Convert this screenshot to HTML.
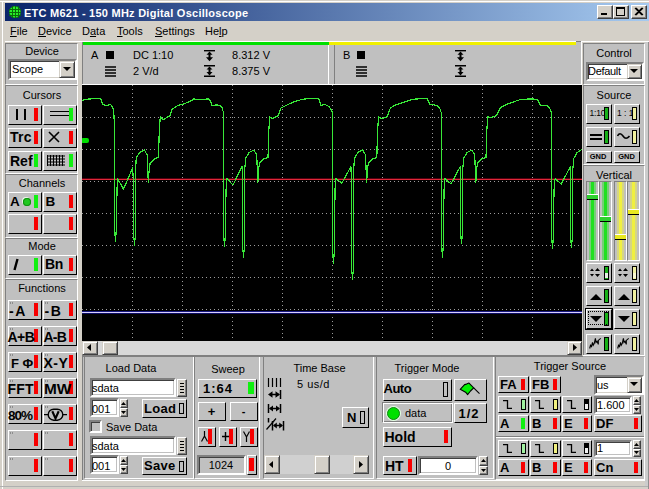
<!DOCTYPE html>
<html><head><meta charset="utf-8"><style>
html,body{margin:0;padding:0}
body{width:649px;height:489px;overflow:hidden;position:relative;background:#D4D0C8;font-family:"Liberation Sans",sans-serif;font-size:11px;color:#000}
.a{position:absolute;box-sizing:content-box}
.t{line-height:20px;height:20px;white-space:nowrap}
.btn{border:1px solid;border-color:#FFFFFF #000000 #000000 #FFFFFF}
</style></head><body>

<div class="a" style="left:0px;top:1px;width:649px;height:1px;background:#FFFFFF"></div>
<div class="a" style="left:2px;top:1px;width:1px;height:488px;background:#FFFFFF"></div>
<div class="a" style="left:5px;top:3px;width:644px;height:18px;background:linear-gradient(to right,#0A246A,#A6CAF0)"></div>
<svg class="a" style="left:9px;top:6px" width="12" height="12" viewBox="0 0 12 12"><circle cx="6" cy="6" r="6" fill="#109010"/><circle cx="6" cy="6" r="5.4" fill="#28F028"/><g stroke="#0A6A0A" stroke-width="1"><line x1="0" y1="3.5" x2="12" y2="3.5"/><line x1="0" y1="6.5" x2="12" y2="6.5"/><line x1="0" y1="9.5" x2="12" y2="9.5"/><line x1="3.5" y1="0" x2="3.5" y2="12"/><line x1="6.5" y1="0" x2="6.5" y2="12"/><line x1="9.5" y1="0" x2="9.5" y2="12"/></g></svg>
<div class="a t" style="left:24px;top:3.19px;font-size:11px;font-weight:bold;color:#FFFFFF;letter-spacing:0.25px">ETC M621 - 150 MHz Digital Oscilloscope</div>
<div class="a" style="left:597px;top:5px;width:14px;height:12px;background:#D4D0C8;border:1px solid;border-color:#FFFFFF #404040 #404040 #FFFFFF;box-shadow:inset -1px -1px #808080"></div>
<div class="a" style="left:613px;top:5px;width:14px;height:12px;background:#D4D0C8;border:1px solid;border-color:#FFFFFF #404040 #404040 #FFFFFF;box-shadow:inset -1px -1px #808080"></div>
<div class="a" style="left:631px;top:5px;width:14px;height:12px;background:#D4D0C8;border:1px solid;border-color:#FFFFFF #404040 #404040 #FFFFFF;box-shadow:inset -1px -1px #808080"></div>
<div class="a" style="left:601px;top:13px;width:6px;height:2px;background:#000"></div>
<div class="a" style="left:616px;top:7px;width:7px;height:6px;border:1px solid #000;border-top-width:2px"></div>
<svg class="a" style="left:634px;top:7px" width="10" height="9" viewBox="0 0 10 9"><path d="M1 1 L8 8 M2 1 L9 8 M8 1 L1 8 M9 1 L2 8" stroke="#000" stroke-width="1.1"/></svg>
<div class="a t" style="left:10px;top:21.19px;font-size:11px;font-weight:normal;color:#000;"><u>F</u>ile</div>
<div class="a t" style="left:38px;top:21.19px;font-size:11px;font-weight:normal;color:#000;"><u>D</u>evice</div>
<div class="a t" style="left:82px;top:21.19px;font-size:11px;font-weight:normal;color:#000;">D<u>a</u>ta</div>
<div class="a t" style="left:117px;top:21.19px;font-size:11px;font-weight:normal;color:#000;"><u>T</u>ools</div>
<div class="a t" style="left:155px;top:21.19px;font-size:11px;font-weight:normal;color:#000;"><u>S</u>ettings</div>
<div class="a t" style="left:205px;top:21.19px;font-size:11px;font-weight:normal;color:#000;">He<u>l</u>p</div>
<div class="a" style="left:5px;top:43px;width:71px;height:40px;background:#C0C0C0;border:1px solid;border-color:#808080 #FFFFFF #FFFFFF #808080"></div>
<div class="a" style="left:5px;top:85px;width:71px;height:87px;background:#C0C0C0;border:1px solid;border-color:#808080 #FFFFFF #FFFFFF #808080"></div>
<div class="a" style="left:5px;top:174px;width:71px;height:62px;background:#C0C0C0;border:1px solid;border-color:#808080 #FFFFFF #FFFFFF #808080"></div>
<div class="a" style="left:5px;top:238px;width:71px;height:39px;background:#C0C0C0;border:1px solid;border-color:#808080 #FFFFFF #FFFFFF #808080"></div>
<div class="a" style="left:5px;top:279px;width:71px;height:200px;background:#C0C0C0;border:1px solid;border-color:#808080 #FFFFFF #FFFFFF #808080"></div>
<div class="a t" style="left:-58px;top:41.19px;width:200px;text-align:center;font-size:11px;font-weight:normal;color:#000;">Device</div>
<div class="a" style="left:8px;top:59px;width:65px;height:17px;background:#FFFFFF;border:2px solid;border-color:#808080 #FFFFFF #FFFFFF #808080;box-shadow:inset 1px 1px #404040, inset -1px -1px #D4D0C8"></div>
<div class="a" style="left:59px;top:61px;width:14px;height:15px;background:#D4D0C8;border:1px solid;border-color:#D4D0C8 #404040 #404040 #D4D0C8;box-shadow:inset 1px 1px #FFFFFF, inset -1px -1px #808080"></div>
<svg class="a" style="left:63px;top:67px" width="8" height="4" viewBox="0 0 8 4"><path d="M0 0H8L4 4Z" fill="#000"/></svg>
<div class="a t" style="left:12px;top:59.19px;font-size:11px;font-weight:normal;color:#000;">Scope</div>
<div class="a t" style="left:-58px;top:85.19px;width:200px;text-align:center;font-size:11px;font-weight:normal;color:#000;">Cursors</div>
<div class="a btn" style="left:8px;top:105px;width:32px;height:18px;background:#C0C0C0"></div>
<div class="a" style="left:34px;top:108px;width:4px;height:13px;background:#F80000"></div>
<div class="a" style="left:16px;top:109px;width:2px;height:11px;background:#000"></div>
<div class="a" style="left:24px;top:109px;width:2px;height:11px;background:#000"></div>
<div class="a btn" style="left:43px;top:105px;width:32px;height:18px;background:#C0C0C0"></div>
<div class="a" style="left:69px;top:108px;width:4px;height:13px;background:#10F010"></div>
<div class="a" style="left:50px;top:111px;width:19px;height:1px;background:#000"></div>
<div class="a" style="left:50px;top:115px;width:19px;height:1px;background:#000"></div>
<div class="a btn" style="left:8px;top:128px;width:32px;height:18px;background:#C0C0C0"></div>
<div class="a" style="left:34px;top:131px;width:4px;height:13px;background:#F80000"></div>
<div class="a t" style="left:10px;top:127.15px;font-size:14px;font-weight:bold;color:#000;letter-spacing:0.25px">Trc</div>
<div class="a btn" style="left:43px;top:128px;width:32px;height:18px;background:#C0C0C0"></div>
<div class="a" style="left:69px;top:131px;width:4px;height:13px;background:#F80000"></div>
<svg class="a" style="left:48px;top:131px" width="12" height="12" viewBox="0 0 12 12"><path d="M1 1L11 11M11 1L1 11" stroke="#000" stroke-width="1.6"/></svg>
<div class="a btn" style="left:8px;top:151px;width:32px;height:18px;background:#C0C0C0"></div>
<div class="a" style="left:34px;top:154px;width:4px;height:13px;background:#10F010"></div>
<div class="a t" style="left:10px;top:151.15px;font-size:14px;font-weight:bold;color:#000;">Ref</div>
<div class="a btn" style="left:43px;top:151px;width:32px;height:18px;background:#C0C0C0"></div>
<div class="a" style="left:69px;top:154px;width:4px;height:13px;background:#10F010"></div>
<svg class="a" style="left:47px;top:155px" width="18" height="11" viewBox="0 0 18 11"><g stroke="#000" stroke-width="1"><line x1="0.5" y1="0" x2="0.5" y2="11"/><line x1="3.5" y1="0" x2="3.5" y2="11"/><line x1="6.5" y1="0" x2="6.5" y2="11"/><line x1="9.5" y1="0" x2="9.5" y2="11"/><line x1="12.5" y1="0" x2="12.5" y2="11"/><line x1="15.5" y1="0" x2="15.5" y2="11"/><line x1="18.5" y1="0" x2="18.5" y2="11"/><line x1="0" y1="1" x2="18" y2="1"/><line x1="0" y1="4" x2="18" y2="4"/><line x1="0" y1="7" x2="18" y2="7"/><line x1="0" y1="10" x2="18" y2="10"/></g></svg>
<div class="a t" style="left:-58px;top:173.19px;width:200px;text-align:center;font-size:11px;font-weight:normal;color:#000;">Channels</div>
<div class="a btn" style="left:8px;top:192px;width:32px;height:18px;background:#C0C0C0"></div>
<div class="a" style="left:34px;top:195px;width:4px;height:13px;background:#10F010"></div>
<div class="a t" style="left:10px;top:192.32px;font-size:13.5px;font-weight:bold;color:#000;">A</div>
<div class="a" style="left:23px;top:198px;width:8px;height:8px;border-radius:50%;background:#20C820;box-shadow:inset 0 0 0 1px #109010, -1px -1px 0 0 #E8F8E8"></div>
<div class="a btn" style="left:43px;top:192px;width:32px;height:18px;background:#C0C0C0"></div>
<div class="a" style="left:69px;top:195px;width:4px;height:13px;background:#F80000"></div>
<div class="a t" style="left:45.5px;top:192.32px;font-size:13.5px;font-weight:bold;color:#000;">B</div>
<div class="a btn" style="left:8px;top:214px;width:32px;height:18px;background:#C0C0C0"></div>
<div class="a" style="left:34px;top:217px;width:4px;height:13px;background:#F80000"></div>
<div class="a btn" style="left:43px;top:214px;width:32px;height:18px;background:#C0C0C0"></div>
<div class="a" style="left:69px;top:217px;width:4px;height:13px;background:#F80000"></div>
<div class="a t" style="left:-58px;top:236.19px;width:200px;text-align:center;font-size:11px;font-weight:normal;color:#000;">Mode</div>
<div class="a btn" style="left:8px;top:255px;width:32px;height:18px;background:#C0C0C0"></div>
<div class="a" style="left:34px;top:258px;width:4px;height:13px;background:#10F010"></div>
<svg class="a" style="left:13px;top:258px" width="6" height="13" viewBox="0 0 6 13"><path d="M4.5 1L1.5 12" stroke="#000" stroke-width="2.4"/></svg>
<div class="a btn" style="left:43px;top:255px;width:32px;height:18px;background:#C0C0C0"></div>
<div class="a" style="left:69px;top:258px;width:4px;height:13px;background:#F80000"></div>
<div class="a t" style="left:45px;top:254.15px;font-size:14px;font-weight:bold;color:#000;letter-spacing:-0.25px">Bn</div>
<div class="a t" style="left:-58px;top:278.19px;width:200px;text-align:center;font-size:11px;font-weight:normal;color:#000;">Functions</div>
<div class="a btn" style="left:8px;top:300px;width:32px;height:18px;background:#C0C0C0"></div>
<div class="a" style="left:34px;top:303px;width:4px;height:13px;background:#F80000"></div>
<div class="a btn" style="left:43px;top:300px;width:32px;height:18px;background:#C0C0C0"></div>
<div class="a" style="left:69px;top:303px;width:4px;height:13px;background:#F80000"></div>
<div class="a" style="left:10px;top:302px;width:1px;height:2px;background:#8C8C8C"></div>
<div class="a" style="left:12px;top:302px;width:1px;height:2px;background:#8C8C8C"></div>
<div class="a" style="left:45px;top:302px;width:1px;height:2px;background:#8C8C8C"></div>
<div class="a" style="left:47px;top:302px;width:1px;height:2px;background:#8C8C8C"></div>
<div class="a btn" style="left:8px;top:326px;width:32px;height:18px;background:#C0C0C0"></div>
<div class="a" style="left:34px;top:329px;width:4px;height:13px;background:#F80000"></div>
<div class="a btn" style="left:43px;top:326px;width:32px;height:18px;background:#C0C0C0"></div>
<div class="a" style="left:69px;top:329px;width:4px;height:13px;background:#F80000"></div>
<div class="a" style="left:10px;top:328px;width:1px;height:2px;background:#8C8C8C"></div>
<div class="a" style="left:12px;top:328px;width:1px;height:2px;background:#8C8C8C"></div>
<div class="a" style="left:45px;top:328px;width:1px;height:2px;background:#8C8C8C"></div>
<div class="a" style="left:47px;top:328px;width:1px;height:2px;background:#8C8C8C"></div>
<div class="a btn" style="left:8px;top:352px;width:32px;height:18px;background:#C0C0C0"></div>
<div class="a" style="left:34px;top:355px;width:4px;height:13px;background:#F80000"></div>
<div class="a btn" style="left:43px;top:352px;width:32px;height:18px;background:#C0C0C0"></div>
<div class="a" style="left:69px;top:355px;width:4px;height:13px;background:#F80000"></div>
<div class="a" style="left:10px;top:354px;width:1px;height:2px;background:#8C8C8C"></div>
<div class="a" style="left:12px;top:354px;width:1px;height:2px;background:#8C8C8C"></div>
<div class="a" style="left:45px;top:354px;width:1px;height:2px;background:#8C8C8C"></div>
<div class="a" style="left:47px;top:354px;width:1px;height:2px;background:#8C8C8C"></div>
<div class="a btn" style="left:8px;top:378px;width:32px;height:18px;background:#C0C0C0"></div>
<div class="a" style="left:34px;top:381px;width:4px;height:13px;background:#F80000"></div>
<div class="a btn" style="left:43px;top:378px;width:32px;height:18px;background:#C0C0C0"></div>
<div class="a" style="left:69px;top:381px;width:4px;height:13px;background:#F80000"></div>
<div class="a" style="left:10px;top:380px;width:1px;height:2px;background:#8C8C8C"></div>
<div class="a" style="left:12px;top:380px;width:1px;height:2px;background:#8C8C8C"></div>
<div class="a" style="left:45px;top:380px;width:1px;height:2px;background:#8C8C8C"></div>
<div class="a" style="left:47px;top:380px;width:1px;height:2px;background:#8C8C8C"></div>
<div class="a btn" style="left:8px;top:404px;width:32px;height:18px;background:#C0C0C0"></div>
<div class="a" style="left:34px;top:407px;width:4px;height:13px;background:#F80000"></div>
<div class="a btn" style="left:43px;top:404px;width:32px;height:18px;background:#C0C0C0"></div>
<div class="a" style="left:69px;top:407px;width:4px;height:13px;background:#F80000"></div>
<div class="a" style="left:10px;top:406px;width:1px;height:2px;background:#8C8C8C"></div>
<div class="a" style="left:12px;top:406px;width:1px;height:2px;background:#8C8C8C"></div>
<div class="a" style="left:45px;top:406px;width:1px;height:2px;background:#8C8C8C"></div>
<div class="a" style="left:47px;top:406px;width:1px;height:2px;background:#8C8C8C"></div>
<div class="a btn" style="left:8px;top:430px;width:32px;height:18px;background:#C0C0C0"></div>
<div class="a" style="left:34px;top:433px;width:4px;height:13px;background:#F80000"></div>
<div class="a btn" style="left:43px;top:430px;width:32px;height:18px;background:#C0C0C0"></div>
<div class="a" style="left:69px;top:433px;width:4px;height:13px;background:#F80000"></div>
<div class="a" style="left:10px;top:432px;width:1px;height:2px;background:#8C8C8C"></div>
<div class="a" style="left:12px;top:432px;width:1px;height:2px;background:#8C8C8C"></div>
<div class="a" style="left:45px;top:432px;width:1px;height:2px;background:#8C8C8C"></div>
<div class="a" style="left:47px;top:432px;width:1px;height:2px;background:#8C8C8C"></div>
<div class="a btn" style="left:8px;top:456px;width:32px;height:18px;background:#C0C0C0"></div>
<div class="a" style="left:34px;top:459px;width:4px;height:13px;background:#F80000"></div>
<div class="a btn" style="left:43px;top:456px;width:32px;height:18px;background:#C0C0C0"></div>
<div class="a" style="left:69px;top:459px;width:4px;height:13px;background:#F80000"></div>
<div class="a" style="left:10px;top:458px;width:1px;height:2px;background:#8C8C8C"></div>
<div class="a" style="left:12px;top:458px;width:1px;height:2px;background:#8C8C8C"></div>
<div class="a" style="left:45px;top:458px;width:1px;height:2px;background:#8C8C8C"></div>
<div class="a" style="left:47px;top:458px;width:1px;height:2px;background:#8C8C8C"></div>
<div class="a t" style="left:9px;top:301.15px;font-size:14px;font-weight:bold;color:#000;letter-spacing:1.5px">-A</div>
<div class="a t" style="left:44.5px;top:301.15px;font-size:14px;font-weight:bold;color:#000;letter-spacing:1.5px">-B</div>
<div class="a t" style="left:7.5px;top:327.15px;font-size:14px;font-weight:bold;color:#000;letter-spacing:-0.5px">A+B</div>
<div class="a t" style="left:43.5px;top:327.15px;font-size:14px;font-weight:bold;color:#000;letter-spacing:-0.75px">A-B</div>
<div class="a t" style="left:11px;top:353.50px;font-size:13px;font-weight:bold;color:#000;">F &#934;</div>
<div class="a t" style="left:43.5px;top:353.15px;font-size:14px;font-weight:bold;color:#000;letter-spacing:0.5px">X-Y</div>
<div class="a t" style="left:7.5px;top:378.65px;font-size:14px;font-weight:bold;color:#000;letter-spacing:0.25px">FFT</div>
<div class="a t" style="left:43.5px;top:378.65px;font-size:14px;font-weight:bold;color:#000;letter-spacing:0px;transform:scaleX(1.1);transform-origin:left">MW</div>
<div class="a t" style="left:8px;top:405.82px;font-size:13.5px;font-weight:bold;color:#000;letter-spacing:-1px">80%</div>
<svg class="a" style="left:44px;top:408px" width="23" height="14" viewBox="0 0 23 14"><rect x="4.2" y="1.2" width="14.6" height="11" rx="5.5" fill="none" stroke="#000" stroke-width="1.4"/><path d="M0 6.7H4.2M18.8 6.7H23" stroke="#000" stroke-width="1.2"/><path d="M8.3 3.3L11.5 10.5L14.7 3.3" fill="none" stroke="#000" stroke-width="2.1"/></svg>
<div class="a" style="left:5px;top:41px;width:644px;height:1px;background:#FFFFFF"></div>
<div class="a" style="left:82px;top:42px;width:500px;height:43px;background:#C0C0C0"></div>
<div class="a" style="left:82px;top:42px;width:1px;height:43px;background:#808080"></div>
<div class="a" style="left:328px;top:45px;width:1px;height:40px;background:#FFFFFF"></div>
<div class="a" style="left:82px;top:84px;width:500px;height:1px;background:#FFFFFF"></div>
<div class="a" style="left:83px;top:42px;width:246px;height:3px;background:#00E000"></div>
<div class="a" style="left:334px;top:45px;width:1px;height:40px;background:#808080"></div>
<div class="a" style="left:581px;top:41px;width:1px;height:44px;background:#FFFFFF"></div>
<div class="a" style="left:334px;top:84px;width:248px;height:1px;background:#FFFFFF"></div>
<div class="a" style="left:329px;top:42px;width:247px;height:3px;background:#F0F000"></div>
<div class="a" style="left:576px;top:41px;width:5px;height:1px;background:#808080"></div>
<div class="a t" style="left:91px;top:45.19px;font-size:11px;font-weight:normal;color:#000;">A</div>
<div class="a" style="left:106px;top:51px;width:8px;height:8px;background:#000"></div>
<svg class="a" style="left:105px;top:66px" width="11" height="11" viewBox="0 0 11 11"><path d="M0 1H11M0 4H11M0 7H11M0 10H11" stroke="#000" stroke-width="1.3"/></svg>
<div class="a t" style="left:133px;top:45.19px;font-size:11px;font-weight:normal;color:#000;">DC 1:10</div>
<div class="a t" style="left:133px;top:61.19px;font-size:11px;font-weight:normal;color:#000;">2 V/d</div>
<svg class="a" style="left:204px;top:50px" width="11" height="12" viewBox="0 0 11 12"><path d="M0 0.7H11" stroke="#000" stroke-width="1.4"/><path d="M5.5 1.5L2.5 4.8H8.5Z M2 7.3H9L5.5 11.3Z" fill="#000"/><path d="M5.5 4V8" stroke="#000" stroke-width="2"/></svg>
<svg class="a" style="left:204px;top:65px" width="11" height="12" viewBox="0 0 11 12"><path d="M0 0.7H11M0 11.3H11" stroke="#000" stroke-width="1.4"/><path d="M5.5 1.5L2.5 4.5H8.5Z M2.5 7H8.5L5.5 10.5Z" fill="#000"/><path d="M5.5 4V7.5" stroke="#000" stroke-width="2"/></svg>
<div class="a t" style="left:70px;top:45.19px;width:200px;text-align:right;font-size:11px;font-weight:normal;color:#000;">8.312 V</div>
<div class="a t" style="left:70px;top:61.19px;width:200px;text-align:right;font-size:11px;font-weight:normal;color:#000;">8.375 V</div>
<div class="a t" style="left:343px;top:45.19px;font-size:11px;font-weight:normal;color:#000;">B</div>
<div class="a" style="left:357px;top:51px;width:8px;height:8px;background:#000"></div>
<svg class="a" style="left:356px;top:66px" width="11" height="11" viewBox="0 0 11 11"><path d="M0 1H11M0 4H11M0 7H11M0 10H11" stroke="#000" stroke-width="1.3"/></svg>
<svg class="a" style="left:455px;top:50px" width="11" height="12" viewBox="0 0 11 12"><path d="M0 0.7H11" stroke="#000" stroke-width="1.4"/><path d="M5.5 1.5L2.5 4.8H8.5Z M2 7.3H9L5.5 11.3Z" fill="#000"/><path d="M5.5 4V8" stroke="#000" stroke-width="2"/></svg>
<svg class="a" style="left:455px;top:65px" width="11" height="12" viewBox="0 0 11 12"><path d="M0 0.7H11M0 11.3H11" stroke="#000" stroke-width="1.4"/><path d="M5.5 1.5L2.5 4.5H8.5Z M2.5 7H8.5L5.5 10.5Z" fill="#000"/><path d="M5.5 4V7.5" stroke="#000" stroke-width="2"/></svg>
<div class="a" style="left:82px;top:85px;width:500px;height:256px;background:#000"></div>
<svg class="a" style="left:82px;top:85px" width="500" height="256" viewBox="82 85 500 256"><g stroke="#9C9C9C" stroke-width="1" stroke-dasharray="1 3"><line x1="132.5" y1="85" x2="132.5" y2="341" stroke-dashoffset="-0"/><line x1="182.5" y1="85" x2="182.5" y2="341" stroke-dashoffset="-0"/><line x1="232.5" y1="85" x2="232.5" y2="341" stroke-dashoffset="-0"/><line x1="282.5" y1="85" x2="282.5" y2="341" stroke-dashoffset="-0"/><line x1="332.5" y1="85" x2="332.5" y2="341" stroke-dashoffset="-0"/><line x1="382.5" y1="85" x2="382.5" y2="341" stroke-dashoffset="-0"/><line x1="432.5" y1="85" x2="432.5" y2="341" stroke-dashoffset="-0"/><line x1="482.5" y1="85" x2="482.5" y2="341" stroke-dashoffset="-0"/><line x1="532.5" y1="85" x2="532.5" y2="341" stroke-dashoffset="-0"/><line x1="582.5" y1="85" x2="582.5" y2="341" stroke-dashoffset="-0"/><line x1="82" y1="117.5" x2="582" y2="117.5"/><line x1="82" y1="149.5" x2="582" y2="149.5"/><line x1="82" y1="181.5" x2="582" y2="181.5"/><line x1="82" y1="213.5" x2="582" y2="213.5"/><line x1="82" y1="245.5" x2="582" y2="245.5"/><line x1="82" y1="277.5" x2="582" y2="277.5"/><line x1="82" y1="309.5" x2="582" y2="309.5"/></g><line x1="82" y1="179.5" x2="582" y2="179.5" stroke="#E02838" stroke-width="1"/><line x1="82" y1="178.5" x2="582" y2="178.5" stroke="#500010" stroke-width="1"/><line x1="82" y1="311.5" x2="582" y2="311.5" stroke="#181880" stroke-width="1"/><line x1="82" y1="313.5" x2="582" y2="313.5" stroke="#0C0C60" stroke-width="1"/><line x1="82" y1="312.5" x2="582" y2="312.5" stroke="#D8D0FF" stroke-width="1"/><rect x="81" y="138" width="8" height="5" rx="2" fill="#00E000"/><path d="M82.0 100.3 L86.0 99.3 L99.4 98.3 L101.4 99.3 L102.4 104.4 L106.5 105.4 L110.6 104.4 L112.7 107.5 L113.7 111.6 L114.5 125.0 L114.5 227.0 L115.5 241.0 L116.5 227.0 L117.0 190.0 L117.4 178.6 L123.5 189.0 L132.6 168.0 L133.5 182.0 L133.5 233.0 L134.5 245.0 L135.5 233.0 L135.5 172.0 L136.2 158.2 L139.5 152.5 L144.4 150.0 L147.2 155.0 L148.3 182.5 L149.3 168.0 L150.2 163.0 L154.2 159.0 L158.5 157.4 L159.3 130.0 L160.3 116.7 L162.8 119.8 L170.0 115.7 L172.0 109.5 L178.0 105.4 L182.0 104.4 L186.1 103.0 L192.2 100.3 L193.2 98.9 L200.4 99.7 L208.6 98.9 L210.6 101.4 L211.7 105.4 L216.8 105.0 L219.8 105.4 L221.9 107.5 L223.3 112.0 L223.5 125.0 L223.5 232.6 L224.5 246.6 L225.5 232.6 L226.0 190.0 L226.9 178.6 L233.0 185.0 L242.1 166.4 L242.5 180.4 L242.5 245.0 L243.5 257.0 L244.5 245.0 L244.5 172.0 L245.7 158.2 L249.0 152.5 L253.9 150.0 L256.7 155.0 L257.8 182.5 L258.8 168.0 L259.7 163.0 L263.7 159.0 L268.0 157.4 L268.8 130.0 L269.8 116.7 L272.0 118.7 L278.1 115.7 L281.0 108.0 L288.1 104.4 L294.3 101.8 L302.4 99.3 L312.7 98.3 L318.8 98.9 L320.9 105.4 L325.0 104.4 L329.0 106.5 L332.1 111.6 L332.5 125.0 L332.5 249.0 L333.5 263.0 L334.5 249.0 L335.0 190.0 L335.7 178.6 L341.8 183.0 L350.9 166.8 L351.5 180.8 L351.5 267.0 L352.5 279.0 L353.5 267.0 L353.5 172.0 L354.5 158.2 L357.8 152.5 L362.7 150.0 L365.5 155.0 L366.6 182.5 L367.6 168.0 L368.5 163.0 L372.5 159.0 L376.8 157.4 L377.6 130.0 L378.6 116.7 L382.0 118.7 L387.1 116.7 L390.2 108.5 L394.3 105.4 L406.5 101.4 L412.7 99.3 L427.0 98.3 L430.0 104.4 L437.2 105.4 L440.3 109.5 L441.3 113.0 L441.5 125.0 L441.5 243.0 L442.5 257.0 L443.5 243.0 L444.0 190.0 L444.9 178.6 L451.0 184.0 L460.1 166.8 L460.5 180.8 L460.5 231.6 L461.5 243.6 L462.5 231.6 L462.5 172.0 L463.7 158.2 L467.0 152.5 L471.9 150.0 L474.7 155.0 L475.8 182.5 L476.8 168.0 L477.7 163.0 L481.7 159.0 L486.0 157.4 L486.8 130.0 L487.8 116.7 L490.2 117.7 L496.3 115.7 L500.4 107.5 L506.5 104.4 L520.9 99.3 L533.1 98.9 L538.2 100.3 L540.3 105.4 L547.4 105.4 L550.5 109.5 L551.5 113.0 L551.5 125.0 L551.5 234.5 L552.5 248.5 L553.5 234.5 L554.0 190.0 L555.1 178.6 L561.2 184.0 L570.3 166.8 L570.5 180.8 L570.5 235.3 L571.5 247.3 L572.5 235.3 L572.5 172.0 L573.9 158.2 L577.2 152.5 L582.0 149.4" fill="none" stroke="#38E838" stroke-width="1.2" stroke-linejoin="round" shape-rendering="crispEdges"/></svg>
<div class="a" style="left:82px;top:341px;width:500px;height:14px;background:#D8D8D8"></div>
<div class="a" style="left:82px;top:341px;width:14px;height:12px;background:#D4D0C8;border:1px solid;border-color:#D4D0C8 #404040 #404040 #D4D0C8;box-shadow:inset 1px 1px #FFFFFF, inset -1px -1px #808080"></div>
<svg class="a" style="left:87.0px;top:344.0px" width="4" height="7" viewBox="0 0 4 7"><path d="M4 0V7L0 3.5Z" fill="#000"/></svg>
<div class="a" style="left:102px;top:341px;width:14px;height:12px;background:#D4D0C8;border:1px solid;border-color:#D4D0C8 #404040 #404040 #D4D0C8;box-shadow:inset 1px 1px #FFFFFF, inset -1px -1px #808080"></div>
<div class="a" style="left:567px;top:341px;width:13px;height:12px;background:#D4D0C8;border:1px solid;border-color:#D4D0C8 #404040 #404040 #D4D0C8;box-shadow:inset 1px 1px #FFFFFF, inset -1px -1px #808080"></div>
<svg class="a" style="left:572.5px;top:344.0px" width="4" height="7" viewBox="0 0 4 7"><path d="M0 0V7L4 3.5Z" fill="#000"/></svg>
<div class="a" style="left:583px;top:43px;width:60px;height:40px;background:#C0C0C0;border:1px solid;border-color:#808080 #FFFFFF #FFFFFF #808080"></div>
<div class="a" style="left:583px;top:85px;width:60px;height:78px;background:#C0C0C0;border:1px solid;border-color:#808080 #FFFFFF #FFFFFF #808080"></div>
<div class="a" style="left:583px;top:165px;width:60px;height:189px;background:#C0C0C0;border:1px solid;border-color:#808080 #FFFFFF #FFFFFF #808080"></div>
<div class="a t" style="left:514px;top:43.19px;width:200px;text-align:center;font-size:11px;font-weight:normal;color:#000;">Control</div>
<div class="a" style="left:586px;top:62px;width:54px;height:15px;background:#FFFFFF;border:2px solid;border-color:#808080 #FFFFFF #FFFFFF #808080;box-shadow:inset 1px 1px #404040, inset -1px -1px #D4D0C8"></div>
<div class="a" style="left:627px;top:64px;width:13px;height:13px;background:#D4D0C8;border:1px solid;border-color:#D4D0C8 #404040 #404040 #D4D0C8;box-shadow:inset 1px 1px #FFFFFF, inset -1px -1px #808080"></div>
<svg class="a" style="left:630px;top:69px" width="8" height="4" viewBox="0 0 8 4"><path d="M0 0H8L4 4Z" fill="#000"/></svg>
<div class="a t" style="left:588px;top:61.19px;font-size:11px;font-weight:normal;color:#000;letter-spacing:-0.3px">Default</div>
<div class="a t" style="left:514px;top:85.19px;width:200px;text-align:center;font-size:11px;font-weight:normal;color:#000;">Source</div>
<div class="a btn" style="left:586px;top:104px;width:24px;height:18px;background:#C0C0C0"></div>
<div class="a t" style="left:589.5px;top:103.05px;font-size:8.5px;font-weight:normal;color:#000;letter-spacing:-0.2px">1:10</div>
<div class="a" style="left:604px;top:107px;width:3px;height:11px;background:#18B018;border:1px solid #000"></div>
<div class="a btn" style="left:614px;top:104px;width:24px;height:18px;background:#C0C0C0"></div>
<div class="a t" style="left:617px;top:103.05px;font-size:8.5px;font-weight:normal;color:#000;letter-spacing:0px">1 : 1</div>
<div class="a" style="left:632px;top:107px;width:3px;height:11px;background:#F0F0A0;border:1px solid #000"></div>
<div class="a btn" style="left:586px;top:127px;width:24px;height:18px;background:#C0C0C0"></div>
<div class="a" style="left:590px;top:134px;width:12px;height:2px;background:#000"></div>
<div class="a" style="left:590px;top:138px;width:12px;height:2px;background:#000"></div>
<div class="a" style="left:604px;top:130px;width:3px;height:12px;background:#18B018;border:1px solid #000"></div>
<div class="a btn" style="left:614px;top:127px;width:24px;height:18px;background:#C0C0C0"></div>
<svg class="a" style="left:617px;top:131px" width="13" height="10" viewBox="0 0 13 10"><path d="M0.5 5C2 2 4 2 6 5S10 8 12.5 5" fill="none" stroke="#000" stroke-width="1.6"/></svg>
<div class="a" style="left:632px;top:130px;width:3px;height:12px;background:#F0F0A0;border:1px solid #000"></div>
<div class="a btn" style="left:586px;top:151px;width:24px;height:10px;background:#C0C0C0"></div>
<div class="a t" style="left:498px;top:147.40px;width:200px;text-align:center;font-size:7.5px;font-weight:bold;color:#000;">GND</div>
<div class="a btn" style="left:614px;top:151px;width:24px;height:10px;background:#C0C0C0"></div>
<div class="a t" style="left:526.5px;top:147.40px;width:200px;text-align:center;font-size:7.5px;font-weight:bold;color:#000;">GND</div>
<div class="a t" style="left:514px;top:165.19px;width:200px;text-align:center;font-size:11px;font-weight:normal;color:#000;">Vertical</div>
<div class="a" style="left:586px;top:181px;width:11px;height:78px;background:#C0C0C0;border:1px solid;border-color:#808080 #FFFFFF #FFFFFF #808080"></div>
<div class="a" style="left:589px;top:182px;width:7px;height:78px;background:#20E020;opacity:0.45"></div>
<div class="a" style="left:591px;top:182px;width:3px;height:78px;background:#20E020"></div>
<div class="a" style="left:587px;top:194px;width:11px;height:4px;background:#30D030;border-top:1px solid #FFFFFF;border-bottom:1px solid #000"></div>
<div class="a" style="left:599px;top:181px;width:11px;height:78px;background:#C0C0C0;border:1px solid;border-color:#808080 #FFFFFF #FFFFFF #808080"></div>
<div class="a" style="left:602px;top:182px;width:7px;height:78px;background:#20E020;opacity:0.45"></div>
<div class="a" style="left:604px;top:182px;width:3px;height:78px;background:#20E020"></div>
<div class="a" style="left:600px;top:216px;width:11px;height:4px;background:#30D030;border-top:1px solid #FFFFFF;border-bottom:1px solid #000"></div>
<div class="a" style="left:614px;top:181px;width:11px;height:78px;background:#C0C0C0;border:1px solid;border-color:#808080 #FFFFFF #FFFFFF #808080"></div>
<div class="a" style="left:617px;top:182px;width:7px;height:78px;background:#F0F040;opacity:0.45"></div>
<div class="a" style="left:619px;top:182px;width:3px;height:78px;background:#F0F040"></div>
<div class="a" style="left:615px;top:234px;width:11px;height:4px;background:#E8E820;border-top:1px solid #FFFFFF;border-bottom:1px solid #000"></div>
<div class="a" style="left:627px;top:181px;width:11px;height:78px;background:#C0C0C0;border:1px solid;border-color:#808080 #FFFFFF #FFFFFF #808080"></div>
<div class="a" style="left:630px;top:182px;width:7px;height:78px;background:#F0F040;opacity:0.45"></div>
<div class="a" style="left:632px;top:182px;width:3px;height:78px;background:#F0F040"></div>
<div class="a" style="left:628px;top:209px;width:11px;height:4px;background:#E8E820;border-top:1px solid #FFFFFF;border-bottom:1px solid #000"></div>
<div class="a btn" style="left:586px;top:263px;width:24px;height:18px;background:#C0C0C0"></div>
<div class="a" style="left:604px;top:266px;width:3px;height:12px;background:#18B018;border:1px solid #000"></div>
<div class="a" style="left:605px;top:273px;width:3px;height:5px;background:#E8F0E8"></div>
<svg class="a" style="left:589px;top:267px" width="12" height="11" viewBox="0 0 12 11"><path d="M1 4H5L3 1.5Z M6 4H11L8.5 1Z M1 7H5L3 9.5Z M6 7H11L8.5 10Z" fill="#000"/></svg>
<div class="a btn" style="left:614px;top:263px;width:24px;height:18px;background:#C0C0C0"></div>
<div class="a" style="left:632px;top:266px;width:3px;height:12px;background:#F0F0A0;border:1px solid #000"></div>
<div class="a" style="left:633px;top:273px;width:3px;height:5px;background:#F8F8D0"></div>
<svg class="a" style="left:617px;top:267px" width="12" height="11" viewBox="0 0 12 11"><path d="M1 4H5L3 1.5Z M6 4H11L8.5 1Z M1 7H5L3 9.5Z M6 7H11L8.5 10Z" fill="#000"/></svg>
<div class="a btn" style="left:586px;top:286px;width:24px;height:18px;background:#C0C0C0"></div>
<div class="a" style="left:604px;top:289px;width:3px;height:12px;background:#18B018;border:1px solid #000"></div>
<svg class="a" style="left:590px;top:294px" width="12" height="6" viewBox="0 0 12 6"><path d="M6 0L0 6H12Z" fill="#000"/></svg>
<div class="a btn" style="left:614px;top:286px;width:24px;height:18px;background:#C0C0C0"></div>
<div class="a" style="left:632px;top:289px;width:3px;height:12px;background:#F0F0A0;border:1px solid #000"></div>
<svg class="a" style="left:618px;top:294px" width="12" height="6" viewBox="0 0 12 6"><path d="M6 0L0 6H12Z" fill="#000"/></svg>
<div class="a btn" style="left:586px;top:309px;width:24px;height:18px;background:#C0C0C0"></div>
<div class="a" style="left:604px;top:312px;width:3px;height:12px;background:#18B018;border:1px solid #000"></div>
<svg class="a" style="left:590px;top:316px" width="12" height="6" viewBox="0 0 12 6"><path d="M0 0H12L6 6Z" fill="#000"/></svg>
<div class="a btn" style="left:614px;top:309px;width:24px;height:18px;background:#C0C0C0"></div>
<div class="a" style="left:632px;top:312px;width:3px;height:12px;background:#F0F0A0;border:1px solid #000"></div>
<svg class="a" style="left:618px;top:316px" width="12" height="6" viewBox="0 0 12 6"><path d="M0 0H12L6 6Z" fill="#000"/></svg>
<div class="a btn" style="left:586px;top:334px;width:24px;height:18px;background:#C0C0C0"></div>
<div class="a" style="left:604px;top:337px;width:3px;height:12px;background:#18B018;border:1px solid #000"></div>
<svg class="a" style="left:586px;top:334px" width="20" height="20" viewBox="586 334 20 20"><path d="M589.7 348.5L590.5 345.3L591.5 346.5L592.5 342.4L593.2 345.3L594.2 343.6L595.4 338.3L596 342.4L597 341.2L598.3 344.4L598.3 340.4L600.7 338.3" fill="none" stroke="#000" stroke-width="1.1" stroke-linejoin="miter"/></svg>
<div class="a btn" style="left:614px;top:334px;width:24px;height:18px;background:#C0C0C0"></div>
<div class="a" style="left:632px;top:337px;width:3px;height:12px;background:#F0F0A0;border:1px solid #000"></div>
<svg class="a" style="left:614px;top:334px" width="20" height="20" viewBox="586 334 20 20"><path d="M589.7 348.5L590.5 345.3L591.5 346.5L592.5 342.4L593.2 345.3L594.2 343.6L595.4 338.3L596 342.4L597 341.2L598.3 344.4L598.3 340.4L600.7 338.3" fill="none" stroke="#000" stroke-width="1.1" stroke-linejoin="miter"/></svg>
<div class="a" style="left:585px;top:308px;width:26px;height:20px;border:1px solid #000"></div>
<div class="a" style="left:588px;top:311px;width:19px;height:12px;border:1px dotted #000"></div>
<div class="a" style="left:82px;top:355px;width:500px;height:1px;background:#808080"></div>
<div class="a" style="left:82px;top:355px;width:1px;height:126px;background:#808080"></div>
<div class="a" style="left:82px;top:480px;width:565px;height:1px;background:#FFFFFF"></div>
<div class="a" style="left:83px;top:356px;width:563px;height:124px;background:#C0C0C0"></div>
<div class="a" style="left:84px;top:356px;width:108px;height:121px;background:#C0C0C0;border:1px solid;border-color:#808080 #FFFFFF #FFFFFF #808080"></div>
<div class="a" style="left:194px;top:356px;width:64px;height:121px;background:#C0C0C0;border:1px solid;border-color:#808080 #FFFFFF #FFFFFF #808080"></div>
<div class="a" style="left:263px;top:356px;width:109px;height:121px;background:#C0C0C0;border:1px solid;border-color:#808080 #FFFFFF #FFFFFF #808080"></div>
<div class="a" style="left:376px;top:356px;width:116px;height:121px;background:#C0C0C0;border:1px solid;border-color:#808080 #FFFFFF #FFFFFF #808080"></div>
<div class="a" style="left:495px;top:356px;width:148px;height:122px;background:#C0C0C0;border:1px solid;border-color:#808080 #FFFFFF #FFFFFF #808080"></div>
<div class="a" style="left:583px;top:355px;width:62px;height:1px;background:#FFFFFF"></div>
<div class="a" style="left:583px;top:356px;width:61px;height:1px;background:#A8A8A8"></div>
<div class="a" style="left:82px;top:356px;width:500px;height:1px;background:#808080"></div>
<div class="a t" style="left:31px;top:358.19px;width:200px;text-align:center;font-size:11px;font-weight:normal;color:#000;">Load Data</div>
<div class="a" style="left:90px;top:378px;width:82px;height:15px;background:#FFFFFF;border:2px solid;border-color:#808080 #FFFFFF #FFFFFF #808080;box-shadow:inset 1px 1px #404040, inset -1px -1px #C0C0C0"></div>
<div class="a t" style="left:92px;top:378.19px;font-size:11px;font-weight:normal;color:#000;">sdata</div>
<div class="a" style="left:177px;top:379px;width:8px;height:16px;background:#D4D0C8;border:1px solid;border-color:#FFFFFF #404040 #404040 #FFFFFF;box-shadow:inset -1px -1px #808080"></div>
<div class="a" style="left:180px;top:383px;width:4px;height:1px;background:#000"></div>
<div class="a" style="left:180px;top:386px;width:4px;height:1px;background:#000"></div>
<div class="a" style="left:180px;top:389px;width:4px;height:1px;background:#000"></div>
<div class="a" style="left:180px;top:392px;width:4px;height:1px;background:#000"></div>
<div class="a" style="left:90px;top:398px;width:25px;height:15px;background:#FFFFFF;border:2px solid;border-color:#808080 #FFFFFF #FFFFFF #808080;box-shadow:inset 1px 1px #404040, inset -1px -1px #C0C0C0"></div>
<div class="a t" style="left:92px;top:399.19px;font-size:11px;font-weight:normal;color:#000;">001</div>
<div class="a" style="left:120px;top:399px;width:6px;height:7px;background:#D4D0C8;border:1px solid;border-color:#FFFFFF #404040 #404040 #FFFFFF;box-shadow:inset -1px -1px #808080"></div>
<svg class="a" style="left:121.0px;top:401.5px" width="5" height="3" viewBox="0 0 5 3"><path d="M0 3H5L2.5 0Z" fill="#000"/></svg>
<div class="a" style="left:120px;top:408px;width:6px;height:7px;background:#D4D0C8;border:1px solid;border-color:#FFFFFF #404040 #404040 #FFFFFF;box-shadow:inset -1px -1px #808080"></div>
<svg class="a" style="left:121.0px;top:410.5px" width="5" height="3" viewBox="0 0 5 3"><path d="M0 0H5L2.5 3Z" fill="#000"/></svg>
<div class="a btn" style="left:142px;top:399px;width:43px;height:17px;background:#C0C0C0"></div>
<div class="a t" style="left:144px;top:398.50px;font-size:13px;font-weight:bold;color:#000;letter-spacing:0.3px">Load</div>
<div class="a" style="left:179px;top:403px;width:3px;height:9px;background:#C0C0C0;border:1px solid #000"></div>
<div class="a" style="left:89px;top:420px;width:9px;height:9px;background:#C0C0C0;border:2px solid;border-color:#808080 #FFFFFF #FFFFFF #808080;box-shadow:inset 1px 1px #404040, inset -1px -1px #C0C0C0"></div>
<div class="a t" style="left:106px;top:417.19px;font-size:11px;font-weight:normal;color:#000;">Save Data</div>
<div class="a" style="left:90px;top:436px;width:82px;height:15px;background:#FFFFFF;border:2px solid;border-color:#808080 #FFFFFF #FFFFFF #808080;box-shadow:inset 1px 1px #404040, inset -1px -1px #C0C0C0"></div>
<div class="a t" style="left:92px;top:436.19px;font-size:11px;font-weight:normal;color:#000;">sdata</div>
<div class="a" style="left:177px;top:437px;width:8px;height:16px;background:#D4D0C8;border:1px solid;border-color:#FFFFFF #404040 #404040 #FFFFFF;box-shadow:inset -1px -1px #808080"></div>
<div class="a" style="left:180px;top:441px;width:4px;height:1px;background:#000"></div>
<div class="a" style="left:180px;top:444px;width:4px;height:1px;background:#000"></div>
<div class="a" style="left:180px;top:447px;width:4px;height:1px;background:#000"></div>
<div class="a" style="left:180px;top:450px;width:4px;height:1px;background:#000"></div>
<div class="a" style="left:90px;top:455px;width:25px;height:15px;background:#FFFFFF;border:2px solid;border-color:#808080 #FFFFFF #FFFFFF #808080;box-shadow:inset 1px 1px #404040, inset -1px -1px #C0C0C0"></div>
<div class="a t" style="left:92px;top:456.19px;font-size:11px;font-weight:normal;color:#000;">001</div>
<div class="a" style="left:120px;top:456px;width:6px;height:7px;background:#D4D0C8;border:1px solid;border-color:#FFFFFF #404040 #404040 #FFFFFF;box-shadow:inset -1px -1px #808080"></div>
<svg class="a" style="left:121.0px;top:458.5px" width="5" height="3" viewBox="0 0 5 3"><path d="M0 3H5L2.5 0Z" fill="#000"/></svg>
<div class="a" style="left:120px;top:465px;width:6px;height:7px;background:#D4D0C8;border:1px solid;border-color:#FFFFFF #404040 #404040 #FFFFFF;box-shadow:inset -1px -1px #808080"></div>
<svg class="a" style="left:121.0px;top:467.5px" width="5" height="3" viewBox="0 0 5 3"><path d="M0 0H5L2.5 3Z" fill="#000"/></svg>
<div class="a btn" style="left:142px;top:457px;width:43px;height:16px;background:#C0C0C0"></div>
<div class="a t" style="left:144px;top:455.50px;font-size:13px;font-weight:bold;color:#000;letter-spacing:0.3px">Save</div>
<div class="a" style="left:179px;top:461px;width:3px;height:9px;background:#C0C0C0;border:1px solid #000"></div>
<div class="a t" style="left:128px;top:359.19px;width:200px;text-align:center;font-size:11px;font-weight:normal;color:#000;">Sweep</div>
<div class="a btn" style="left:198px;top:379px;width:57px;height:17px;background:#C0C0C0"></div>
<div class="a t" style="left:203px;top:378.50px;font-size:13px;font-weight:bold;color:#000;letter-spacing:1px">1:64</div>
<div class="a" style="left:248px;top:382px;width:6px;height:12px;background:#10F010"></div>
<div class="a btn" style="left:198px;top:402px;width:26px;height:17px;background:#C0C0C0"></div>
<div class="a t" style="left:111.5px;top:401.50px;width:200px;text-align:center;font-size:13px;font-weight:bold;color:#000;">+</div>
<div class="a btn" style="left:230px;top:402px;width:26px;height:17px;background:#C0C0C0"></div>
<div class="a t" style="left:143.5px;top:401.19px;width:200px;text-align:center;font-size:11px;font-weight:bold;color:#000;">-</div>
<div class="a btn" style="left:198px;top:427px;width:16px;height:18px;background:#C0C0C0"></div>
<div class="a" style="left:208px;top:429px;width:4px;height:15px;background:#F80000"></div>
<svg class="a" style="left:201px;top:431px" width="7" height="11" viewBox="0 0 7 11"><path d="M3.5 0V5L0.5 10.5M3.5 5L6.5 10.5" fill="none" stroke="#000" stroke-width="1.2"/></svg>
<div class="a btn" style="left:219px;top:427px;width:16px;height:18px;background:#C0C0C0"></div>
<div class="a" style="left:229px;top:429px;width:4px;height:15px;background:#F80000"></div>
<svg class="a" style="left:222px;top:431px" width="7" height="11" viewBox="0 0 7 11"><path d="M3.5 1V10M0 5.5H7" fill="none" stroke="#000" stroke-width="1.4"/></svg>
<div class="a btn" style="left:240px;top:427px;width:16px;height:18px;background:#C0C0C0"></div>
<div class="a" style="left:250px;top:429px;width:4px;height:15px;background:#F80000"></div>
<svg class="a" style="left:243px;top:431px" width="7" height="11" viewBox="0 0 7 11"><path d="M3.5 11V6L0.5 0.5M3.5 6L6.5 0.5" fill="none" stroke="#000" stroke-width="1.2"/></svg>
<div class="a" style="left:197px;top:455px;width:45px;height:16px;background:#C0C0C0;border:2px solid;border-color:#808080 #FFFFFF #FFFFFF #808080;box-shadow:inset 1px 1px #404040, inset -1px -1px #C0C0C0"></div>
<div class="a t" style="left:121px;top:455.19px;width:200px;text-align:center;font-size:11px;font-weight:normal;color:#000;">1024</div>
<div class="a btn" style="left:247px;top:455px;width:8px;height:18px;background:#C0C0C0"></div>
<div class="a" style="left:249px;top:458px;width:5px;height:13px;background:#F80000"></div>
<div class="a t" style="left:219.5px;top:358.19px;width:200px;text-align:center;font-size:11px;font-weight:normal;color:#000;">Time Base</div>
<div class="a t" style="left:297px;top:374.19px;font-size:11px;font-weight:normal;color:#000;letter-spacing:0.5px">5 us/d</div>
<svg class="a" style="left:265px;top:377px" width="21" height="56" viewBox="265 377 21 56"><path d="M268.5 378V387M272.5 378V387M276.5 378V387M280.5 378V387" stroke="#000" stroke-width="1.2"/><path d="M280.5 390V399M270 394.5H279" stroke="#000" stroke-width="1.5"/><path d="M268 394.5L272.5 391.3V397.7Z M280 394.5L275.5 391.3V397.7Z" fill="#000"/><path d="M268.5 404V413M280.5 404V413M270 408.5H279" stroke="#000" stroke-width="1.5"/><path d="M269 408.5L273 405.5V411.5Z M280 408.5L276 405.5V411.5Z" fill="#000"/><path d="M268.5 418V422.5" stroke="#000" stroke-width="1.5"/><path d="M266.5 429.5L276 418.5" stroke="#000" stroke-width="1.2"/><path d="M272.5 421V430.5M283.5 421V430.5M274 425.5H282" stroke="#000" stroke-width="1.5"/><path d="M273 425.5L276.8 422.5V428.5Z M283 425.5L279.2 422.5V428.5Z" fill="#000"/></svg>
<div class="a btn" style="left:342px;top:407px;width:25px;height:19px;background:#C0C0C0"></div>
<div class="a t" style="left:347px;top:407.50px;font-size:13px;font-weight:bold;color:#000;">N</div>
<div class="a" style="left:360px;top:411px;width:3px;height:11px;background:#C0C0C0;border:1px solid #000"></div>
<div class="a" style="left:264px;top:455px;width:105px;height:19px;background:#D0D0D0"></div>
<div class="a" style="left:264px;top:455px;width:14px;height:17px;background:#D4D0C8;border:1px solid;border-color:#D4D0C8 #404040 #404040 #D4D0C8;box-shadow:inset 1px 1px #FFFFFF, inset -1px -1px #808080"></div>
<svg class="a" style="left:269.0px;top:460.5px" width="4" height="7" viewBox="0 0 4 7"><path d="M4 0V7L0 3.5Z" fill="#000"/></svg>
<div class="a" style="left:314px;top:455px;width:14px;height:17px;background:#D4D0C8;border:1px solid;border-color:#D4D0C8 #404040 #404040 #D4D0C8;box-shadow:inset 1px 1px #FFFFFF, inset -1px -1px #808080"></div>
<div class="a" style="left:353px;top:455px;width:14px;height:17px;background:#D4D0C8;border:1px solid;border-color:#D4D0C8 #404040 #404040 #D4D0C8;box-shadow:inset 1px 1px #FFFFFF, inset -1px -1px #808080"></div>
<svg class="a" style="left:359.0px;top:460.5px" width="4" height="7" viewBox="0 0 4 7"><path d="M0 0V7L4 3.5Z" fill="#000"/></svg>
<div class="a t" style="left:327px;top:358.19px;width:200px;text-align:center;font-size:11px;font-weight:normal;color:#000;">Trigger Mode</div>
<div class="a btn" style="left:383px;top:379px;width:67px;height:20px;background:#C0C0C0"></div>
<div class="a t" style="left:383.5px;top:379.00px;font-size:13px;font-weight:bold;color:#000;letter-spacing:-0.5px">Auto</div>
<div class="a" style="left:443px;top:382px;width:3px;height:13px;background:#C0C0C0;border:1px solid #000"></div>
<div class="a btn" style="left:454px;top:379px;width:31px;height:20px;background:#C0C0C0"></div>
<svg class="a" style="left:459px;top:382px" width="22" height="14" viewBox="0 0 22 14"><path d="M1.2 7.3L5.6 2.6L7.5 2.1L10 1.1L14.7 5.8L11.5 9L8.6 12.6L6.6 10.2Z" fill="#00F000" stroke="#000" stroke-width="1.1" stroke-linejoin="round"/><path d="M14.7 5.8L20.5 11.7" stroke="#000" stroke-width="1.1"/></svg>
<div class="a" style="left:382px;top:402px;width:69px;height:19px;border:1px solid;border-color:#808080 #FFFFFF #FFFFFF #808080;box-shadow:inset 1px 1px #FFFFFF, inset -1px -1px #808080"></div>
<div class="a" style="left:387px;top:407px;width:11px;height:11px;border-radius:50%;background:#00E000;border:1px solid #108010;box-shadow:0 0 0 1px #E0FFE0"></div>
<div class="a t" style="left:405px;top:403.19px;font-size:11px;font-weight:normal;color:#000;">data</div>
<div class="a btn" style="left:454px;top:403px;width:31px;height:18px;background:#C0C0C0"></div>
<div class="a t" style="left:369px;top:403.50px;width:200px;text-align:center;font-size:13px;font-weight:bold;color:#000;letter-spacing:1px">1/2</div>
<div class="a btn" style="left:383px;top:427px;width:67px;height:18px;background:#C0C0C0"></div>
<div class="a t" style="left:384.5px;top:426.65px;font-size:14px;font-weight:bold;color:#000;letter-spacing:0px">Hold</div>
<div class="a" style="left:444px;top:430px;width:4px;height:13px;background:#F80000"></div>
<div class="a btn" style="left:383px;top:456px;width:32px;height:17px;background:#C0C0C0"></div>
<div class="a t" style="left:385px;top:455.65px;font-size:14px;font-weight:bold;color:#000;">HT</div>
<div class="a" style="left:408px;top:459px;width:4px;height:13px;background:#F80000"></div>
<div class="a" style="left:418px;top:456px;width:56px;height:15px;background:#FFFFFF;border:2px solid;border-color:#808080 #FFFFFF #FFFFFF #808080;box-shadow:inset 1px 1px #404040, inset -1px -1px #C0C0C0"></div>
<div class="a t" style="left:348px;top:456.19px;width:200px;text-align:center;font-size:11px;font-weight:normal;color:#000;">0</div>
<div class="a" style="left:479px;top:456px;width:7px;height:8px;background:#D4D0C8;border:1px solid;border-color:#FFFFFF #404040 #404040 #FFFFFF;box-shadow:inset -1px -1px #808080"></div>
<svg class="a" style="left:480.5px;top:459.0px" width="5" height="3" viewBox="0 0 5 3"><path d="M0 3H5L2.5 0Z" fill="#000"/></svg>
<div class="a" style="left:479px;top:466px;width:7px;height:7px;background:#D4D0C8;border:1px solid;border-color:#FFFFFF #404040 #404040 #FFFFFF;box-shadow:inset -1px -1px #808080"></div>
<svg class="a" style="left:480.5px;top:468.5px" width="5" height="3" viewBox="0 0 5 3"><path d="M0 0H5L2.5 3Z" fill="#000"/></svg>
<div class="a t" style="left:470px;top:355.69px;width:200px;text-align:center;font-size:11px;font-weight:normal;color:#000;">Trigger Source</div>
<div class="a btn" style="left:498px;top:376px;width:29px;height:15px;background:#C0C0C0"></div>
<div class="a t" style="left:500px;top:374.50px;font-size:13px;font-weight:bold;color:#000;">FA</div>
<div class="a" style="left:521px;top:379px;width:4px;height:11px;background:#F80000"></div>
<div class="a btn" style="left:530px;top:376px;width:29px;height:15px;background:#C0C0C0"></div>
<div class="a t" style="left:532px;top:374.50px;font-size:13px;font-weight:bold;color:#000;">FB</div>
<div class="a" style="left:553px;top:379px;width:4px;height:11px;background:#F80000"></div>
<div class="a" style="left:594px;top:375px;width:46px;height:16px;background:#FFFFFF;border:2px solid;border-color:#808080 #FFFFFF #FFFFFF #808080;box-shadow:inset 1px 1px #404040, inset -1px -1px #D4D0C8"></div>
<div class="a" style="left:627px;top:377px;width:13px;height:14px;background:#D4D0C8;border:1px solid;border-color:#D4D0C8 #404040 #404040 #D4D0C8;box-shadow:inset 1px 1px #FFFFFF, inset -1px -1px #808080"></div>
<svg class="a" style="left:630px;top:382px" width="8" height="4" viewBox="0 0 8 4"><path d="M0 0H8L4 4Z" fill="#000"/></svg>
<div class="a t" style="left:597px;top:375.19px;font-size:11px;font-weight:normal;color:#000;">us</div>
<div class="a btn" style="left:498px;top:396px;width:29px;height:15px;background:#C0C0C0"></div>
<svg class="a" style="left:503px;top:400px" width="10" height="9" viewBox="0 0 10 9"><path d="M0 0.7H4.5V8.3H9" fill="none" stroke="#000" stroke-width="1.3"/></svg>
<div class="a" style="left:521px;top:399px;width:3px;height:9px;background:#A0F0A0;border:1px solid #000"></div>
<div class="a btn" style="left:530px;top:396px;width:29px;height:15px;background:#C0C0C0"></div>
<svg class="a" style="left:535px;top:400px" width="10" height="9" viewBox="0 0 10 9"><path d="M0 0.7H4.5V8.3H9" fill="none" stroke="#000" stroke-width="1.3"/></svg>
<div class="a" style="left:553px;top:399px;width:3px;height:9px;background:#F0F080;border:1px solid #000"></div>
<div class="a btn" style="left:562px;top:396px;width:28px;height:15px;background:#C0C0C0"></div>
<svg class="a" style="left:567px;top:400px" width="10" height="9" viewBox="0 0 10 9"><path d="M0 0.7H4.5V8.3H9" fill="none" stroke="#000" stroke-width="1.3"/></svg>
<div class="a" style="left:584px;top:399px;width:3px;height:9px;background:#F0F0F0;border:1px solid #000"></div>
<div class="a" style="left:585px;top:400px;width:3px;height:4px;background:#000"></div>
<div class="a" style="left:594px;top:396px;width:34px;height:14px;background:#FFFFFF;border:2px solid;border-color:#808080 #FFFFFF #FFFFFF #808080;box-shadow:inset 1px 1px #404040, inset -1px -1px #C0C0C0"></div>
<div class="a t" style="left:597px;top:395.19px;font-size:11px;font-weight:normal;color:#000;">1.600</div>
<div class="a" style="left:633px;top:396px;width:6px;height:7px;background:#D4D0C8;border:1px solid;border-color:#FFFFFF #404040 #404040 #FFFFFF;box-shadow:inset -1px -1px #808080"></div>
<svg class="a" style="left:634.0px;top:398.5px" width="5" height="3" viewBox="0 0 5 3"><path d="M0 3H5L2.5 0Z" fill="#000"/></svg>
<div class="a" style="left:633px;top:405px;width:6px;height:7px;background:#D4D0C8;border:1px solid;border-color:#FFFFFF #404040 #404040 #FFFFFF;box-shadow:inset -1px -1px #808080"></div>
<svg class="a" style="left:634.0px;top:407.5px" width="5" height="3" viewBox="0 0 5 3"><path d="M0 0H5L2.5 3Z" fill="#000"/></svg>
<div class="a btn" style="left:498px;top:415px;width:29px;height:15px;background:#C0C0C0"></div>
<div class="a t" style="left:500px;top:413.50px;font-size:13px;font-weight:bold;color:#000;">A</div>
<div class="a" style="left:521px;top:418px;width:4px;height:11px;background:#10F010"></div>
<div class="a btn" style="left:530px;top:415px;width:29px;height:15px;background:#C0C0C0"></div>
<div class="a t" style="left:532px;top:413.50px;font-size:13px;font-weight:bold;color:#000;">B</div>
<div class="a" style="left:553px;top:418px;width:4px;height:11px;background:#F80000"></div>
<div class="a btn" style="left:562px;top:415px;width:28px;height:15px;background:#C0C0C0"></div>
<div class="a t" style="left:564px;top:413.50px;font-size:13px;font-weight:bold;color:#000;">E</div>
<div class="a" style="left:584px;top:418px;width:4px;height:11px;background:#F80000"></div>
<div class="a btn" style="left:594px;top:415px;width:46px;height:15px;background:#C0C0C0"></div>
<div class="a t" style="left:596px;top:413.50px;font-size:13px;font-weight:bold;color:#000;">DF</div>
<div class="a" style="left:634px;top:418px;width:4px;height:11px;background:#F80000"></div>
<div class="a" style="left:496px;top:436px;width:148px;height:1px;background:#808080"></div>
<div class="a" style="left:496px;top:437px;width:148px;height:1px;background:#FFFFFF"></div>
<div class="a btn" style="left:498px;top:440px;width:29px;height:15px;background:#C0C0C0"></div>
<svg class="a" style="left:503px;top:444px" width="10" height="9" viewBox="0 0 10 9"><path d="M0 0.7H4.5V8.3H9" fill="none" stroke="#000" stroke-width="1.3"/></svg>
<div class="a" style="left:521px;top:443px;width:3px;height:9px;background:#A0F0A0;border:1px solid #000"></div>
<div class="a btn" style="left:530px;top:440px;width:29px;height:15px;background:#C0C0C0"></div>
<svg class="a" style="left:535px;top:444px" width="10" height="9" viewBox="0 0 10 9"><path d="M0 0.7H4.5V8.3H9" fill="none" stroke="#000" stroke-width="1.3"/></svg>
<div class="a" style="left:553px;top:443px;width:3px;height:9px;background:#F0F080;border:1px solid #000"></div>
<div class="a btn" style="left:562px;top:440px;width:28px;height:15px;background:#C0C0C0"></div>
<svg class="a" style="left:567px;top:444px" width="10" height="9" viewBox="0 0 10 9"><path d="M0 0.7H4.5V8.3H9" fill="none" stroke="#000" stroke-width="1.3"/></svg>
<div class="a" style="left:584px;top:443px;width:3px;height:9px;background:#F0F0F0;border:1px solid #000"></div>
<div class="a" style="left:585px;top:444px;width:3px;height:4px;background:#000"></div>
<div class="a" style="left:594px;top:440px;width:34px;height:13px;background:#FFFFFF;border:2px solid;border-color:#808080 #FFFFFF #FFFFFF #808080;box-shadow:inset 1px 1px #404040, inset -1px -1px #C0C0C0"></div>
<div class="a t" style="left:597px;top:438.19px;font-size:11px;font-weight:normal;color:#000;">1</div>
<div class="a" style="left:633px;top:440px;width:6px;height:7px;background:#D4D0C8;border:1px solid;border-color:#FFFFFF #404040 #404040 #FFFFFF;box-shadow:inset -1px -1px #808080"></div>
<svg class="a" style="left:634.0px;top:442.5px" width="5" height="3" viewBox="0 0 5 3"><path d="M0 3H5L2.5 0Z" fill="#000"/></svg>
<div class="a" style="left:633px;top:449px;width:6px;height:6px;background:#D4D0C8;border:1px solid;border-color:#FFFFFF #404040 #404040 #FFFFFF;box-shadow:inset -1px -1px #808080"></div>
<svg class="a" style="left:634.0px;top:451.0px" width="5" height="3" viewBox="0 0 5 3"><path d="M0 0H5L2.5 3Z" fill="#000"/></svg>
<div class="a btn" style="left:498px;top:459px;width:29px;height:15px;background:#C0C0C0"></div>
<div class="a t" style="left:500px;top:457.50px;font-size:13px;font-weight:bold;color:#000;">A</div>
<div class="a" style="left:521px;top:462px;width:4px;height:11px;background:#F80000"></div>
<div class="a btn" style="left:530px;top:459px;width:29px;height:15px;background:#C0C0C0"></div>
<div class="a t" style="left:532px;top:457.50px;font-size:13px;font-weight:bold;color:#000;">B</div>
<div class="a" style="left:553px;top:462px;width:4px;height:11px;background:#F80000"></div>
<div class="a btn" style="left:562px;top:459px;width:28px;height:15px;background:#C0C0C0"></div>
<div class="a t" style="left:564px;top:457.50px;font-size:13px;font-weight:bold;color:#000;">E</div>
<div class="a" style="left:584px;top:462px;width:4px;height:11px;background:#F80000"></div>
<div class="a btn" style="left:594px;top:459px;width:46px;height:15px;background:#C0C0C0"></div>
<div class="a t" style="left:596px;top:457.50px;font-size:13px;font-weight:bold;color:#000;">Cn</div>
<div class="a" style="left:634px;top:462px;width:4px;height:11px;background:#F80000"></div>
<div class="a" style="left:0px;top:486px;width:649px;height:1px;background:#B0B0B0"></div>
<div class="a" style="left:645px;top:42px;width:3px;height:444px;background:#CCCCCC"></div>
<div class="a" style="left:648px;top:42px;width:1px;height:447px;background:#909090"></div>
</body></html>
